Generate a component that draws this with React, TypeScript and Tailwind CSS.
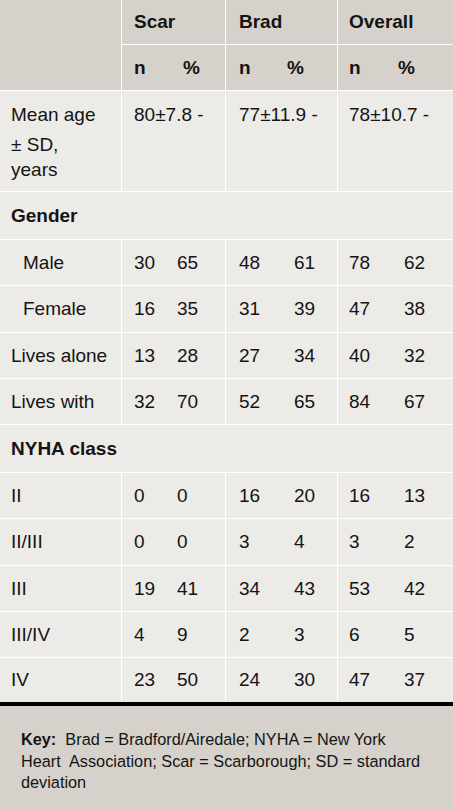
import React from "react";

type Row = { label: string; indent?: boolean; v: [string, string, string, string, string, string]; h: string };

const rows1: Row[] = [
  { label: "Male", indent: true, v: ["30", "65", "48", "61", "78", "62"], h: "h-[46px]" },
  { label: "Female", indent: true, v: ["16", "35", "31", "39", "47", "38"], h: "h-[47px]" },
  { label: "Lives alone", v: ["13", "28", "27", "34", "40", "32"], h: "h-[46px]" },
  { label: "Lives with", v: ["32", "70", "52", "65", "84", "67"], h: "h-[46px]" },
];

const rows2: Row[] = [
  { label: "II", v: ["0", "0", "16", "20", "16", "13"], h: "h-[46px]" },
  { label: "II/III", v: ["0", "0", "3", "4", "3", "2"], h: "h-[47px]" },
  { label: "III", v: ["19", "41", "34", "43", "53", "42"], h: "h-[46px]" },
  { label: "III/IV", v: ["4", "9", "2", "3", "6", "5"], h: "h-[46px]" },
  { label: "IV", v: ["23", "50", "24", "30", "47", "37"], h: "h-[44px]" },
];

function DataRow({ r, last }: { r: Row; last?: boolean }) {
  return (
    <div className={`flex ${r.h} ${last ? "" : "border-b border-white"}`}>
      <div className={`w-[121px] flex items-center ${r.indent ? "pl-[23px]" : "pl-[11px]"}`}>{r.label}</div>
      <div className="w-[104px] border-l border-white flex items-center pl-[12px]">
        <span className="w-[43px]">{r.v[0]}</span>
        <span>{r.v[1]}</span>
      </div>
      <div className="w-[112px] border-l border-white flex items-center pl-[13px]">
        <span className="w-[55px]">{r.v[2]}</span>
        <span>{r.v[3]}</span>
      </div>
      <div className="w-[116px] border-l border-white flex items-center pl-[11px]">
        <span className="w-[55px]">{r.v[4]}</span>
        <span>{r.v[5]}</span>
      </div>
    </div>
  );
}

export default function App() {
  return (
    <div
      className="w-[453px] h-[810px] bg-[#edebe8] text-[#141414] text-[19px] leading-[26px]"
      style={{ fontFamily: '"Liberation Sans", Arial, sans-serif' }}
    >
      {/* Header */}
      <div className="flex bg-[#d6d1cb] border-b border-white">
        <div className="w-[121px] h-[90px]" />
        <div className="flex-1 flex flex-col font-bold">
          <div className="flex h-[45px] border-b border-white">
            <div className="w-[104px] border-l border-white flex items-center pl-[12px]">Scar</div>
            <div className="w-[112px] border-l border-white flex items-center pl-[13px]">Brad</div>
            <div className="w-[116px] border-l border-white flex items-center pl-[11px]">Overall</div>
          </div>
          <div className="flex h-[45px]">
            <div className="w-[104px] border-l border-white flex items-center pl-[12px]">
              <span className="w-[49px]">n</span>
              <span>%</span>
            </div>
            <div className="w-[112px] border-l border-white flex items-center pl-[13px]">
              <span className="w-[48px]">n</span>
              <span>%</span>
            </div>
            <div className="w-[116px] border-l border-white flex items-center pl-[11px]">
              <span className="w-[49px]">n</span>
              <span>%</span>
            </div>
          </div>
        </div>
      </div>

      {/* Mean age */}
      <div className="flex h-[101px] border-b border-white">
        <div className="w-[121px] pl-[11px] pt-[11px]">
          <div className="h-[30px]">Mean age</div>
          <div className="h-[25px]">± SD,</div>
          <div>years</div>
        </div>
        <div className="w-[104px] border-l border-white pl-[12px] pt-[11px]">80±7.8 -</div>
        <div className="w-[112px] border-l border-white pl-[13px] pt-[11px]">77±11.9 -</div>
        <div className="w-[116px] border-l border-white pl-[11px] pt-[11px]">78±10.7 -</div>
      </div>

      {/* Gender */}
      <div className="h-[48px] border-b border-white flex items-center pl-[11px] font-bold">Gender</div>
      {rows1.map((r) => (
        <DataRow key={r.label} r={r} />
      ))}

      {/* NYHA */}
      <div className="h-[48px] border-b border-white flex items-center pl-[11px] font-bold">NYHA class</div>
      {rows2.map((r, i) => (
        <DataRow key={r.label} r={r} last={i === rows2.length - 1} />
      ))}

      {/* Key */}
      <div className="border-t-4 border-black bg-[#d6d1cb] h-[108px] pl-[21px] pt-[23px] text-[16.3px] leading-[21.5px] whitespace-pre">
        <span className="font-bold">Key:</span>
        {"  Brad = Bradford/Airedale; NYHA = New York"}
        <br />
        {"Heart  Association; Scar = Scarborough; SD = standard"}
        <br />
        {"deviation"}
      </div>
    </div>
  );
}
